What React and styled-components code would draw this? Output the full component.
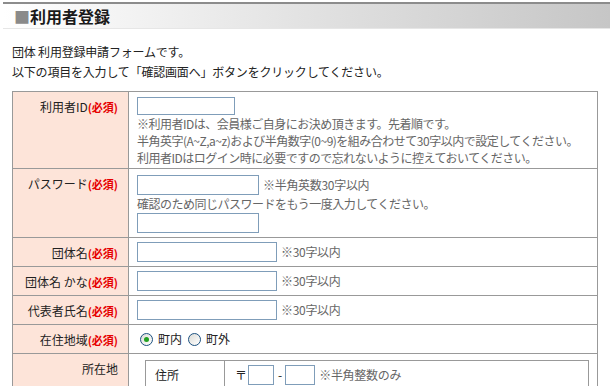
import React from 'react';
import styled, { createGlobalStyle } from 'styled-components';

const GlobalStyle = createGlobalStyle`
  body {
    margin: 0;
    background: #ffffff;
    color: #222;
    font-family: "Noto Sans CJK JP", "Noto Sans", sans-serif;
    font-size: 12px;
  }
`;

const Heading = styled.h1`
  margin: 2px 0 0 3px;
  height: 24px;
  padding-left: 11px;
  border-top: 2px solid #8c8c8c;
  border-bottom: 1px solid #e6e6e6;
  background: linear-gradient(to right, #ffffff 0%, #e2e2e2 50%, #c6c6c6 100%);
  font-size: 16px;
  font-weight: bold;
  line-height: 24px;
  color: #1a1a1a;
`;

const Square = styled.span`
  color: #8a8a8a;
`;

const Intro = styled.p`
  margin: 13px 0 0 12px;
  line-height: 20px;
  letter-spacing: -0.2px;
`;

const FormTable = styled.table`
  margin: 9px 0 0 12px;
  width: 586px;
  border-collapse: collapse;
  table-layout: fixed;
`;

const Label = styled.th`
  width: 105px;
  padding: 6px 10px 0 0;
  border: 1px solid #999;
  background: #fde4d9;
  text-align: right;
  vertical-align: top;
  font-weight: normal;
  line-height: 17px;
  color: #222;
  white-space: nowrap;
`;

const Required = styled.span`
  color: #e60000;
  font-weight: bold;
  font-size: 11px;
`;

const Value = styled.td`
  padding: ${(p) => p.$pad || '4px 8px'};
  border: 1px solid #999;
  vertical-align: top;
  line-height: 20px;
`;

const Field = styled.input`
  box-sizing: border-box;
  width: ${(p) => p.$w}px;
  height: ${(p) => p.$h || 20}px;
  margin: 0;
  padding: 1px 3px;
  border: 1px solid #7f9db9;
  background: #fff;
  vertical-align: top;
  font: inherit;
`;

const Hint = styled.span`
  margin-left: 4px;
  color: #666;
  letter-spacing: -0.3px;
`;

const Note = styled.div`
  margin-top: ${(p) => p.$mt || 0}px;
  color: #666;
  line-height: ${(p) => p.$lh || 17}px;
  letter-spacing: -0.5px;
  white-space: nowrap;
`;

const Line = styled.div`
  display: flex;
  align-items: center;
  height: 20px;
  margin-top: ${(p) => p.$mt || 0}px;
`;

const RadioGroup = styled.div`
  display: flex;
  align-items: center;
  height: 20px;
  padding-left: 3px;
`;

const Radio = styled.span`
  position: relative;
  box-sizing: border-box;
  width: 13px;
  height: 13px;
  margin-right: 5px;
  border: 1px solid #1c5180;
  border-radius: 50%;
  background: linear-gradient(135deg, #dcdcd7, #ffffff);

  &::after {
    content: '';
    display: ${(p) => (p.$checked ? 'block' : 'none')};
    position: absolute;
    left: 3px;
    top: 3px;
    width: 5px;
    height: 5px;
    border-radius: 50%;
    background: #21a121;
  }
`;

const RadioText = styled.span`
  margin-right: 6px;
`;

const Inner = styled.table`
  margin: 1px 0 0 8px;
  width: 444px;
  border-collapse: collapse;
`;

const InnerLabel = styled.th`
  width: 69px;
  padding: 4px 0 4px 9px;
  border: 1px solid #999;
  text-align: left;
  font-weight: normal;
  line-height: 20px;
`;

const InnerValue = styled.td`
  padding: 4px 0 4px 10px;
  border: 1px solid #999;
  line-height: 20px;
`;

const Mark = styled.span`
  margin-right: 1px;
`;

const Dash = styled.span`
  margin: 0 3px 0 4px;
`;

const req = <Required>(必須)</Required>;

export default function App() {
  return (
    <>
      <GlobalStyle />
      <Heading>
        <Square>■</Square>利用者登録
      </Heading>
      <Intro>
        団体 利用登録申請フォームです。
        <br />
        以下の項目を入力して「確認画面へ」ボタンをクリックしてください。
      </Intro>
      <FormTable>
        <tbody>
          <tr>
            <Label>利用者ID{req}</Label>
            <Value $pad="5px 8px 2px">
              <Field $w={98} $h={18} />
              <Note $mt={-2}>
                ※利用者IDは、会員様ご自身にお決め頂きます。先着順です。
                <br />
                半角英字(A~Z,a~z)および半角数字(0~9)を組み合わせて30字以内で設定してください。
                <br />
                利用者IDはログイン時に必要ですので忘れないように控えておいてください。
              </Note>
            </Value>
          </tr>
          <tr>
            <Label>パスワード{req}</Label>
            <Value $pad="6px 8px 4px">
              <Line>
                <Field $w={122} />
                <Hint>※半角英数30字以内</Hint>
              </Line>
              <Note $lh={17}>確認のため同じパスワードをもう一度入力してください。</Note>
              <Line $mt={1}>
                <Field $w={122} />
              </Line>
            </Value>
          </tr>
          <tr>
            <Label>団体名{req}</Label>
            <Value>
              <Line>
                <Field $w={140} />
                <Hint>※30字以内</Hint>
              </Line>
            </Value>
          </tr>
          <tr>
            <Label>団体名 かな{req}</Label>
            <Value>
              <Line>
                <Field $w={140} />
                <Hint>※30字以内</Hint>
              </Line>
            </Value>
          </tr>
          <tr>
            <Label>代表者氏名{req}</Label>
            <Value>
              <Line>
                <Field $w={140} />
                <Hint>※30字以内</Hint>
              </Line>
            </Value>
          </tr>
          <tr>
            <Label>在住地域{req}</Label>
            <Value>
              <RadioGroup>
                <Radio $checked />
                <RadioText>町内</RadioText>
                <Radio />
                <RadioText>町外</RadioText>
              </RadioGroup>
            </Value>
          </tr>
          <tr>
            <Label>所在地</Label>
            <Value $pad="5px 8px 8px">
              <Inner>
                <tbody>
                  <tr>
                    <InnerLabel>住所</InnerLabel>
                    <InnerValue>
                      <Line>
                        <Mark>〒</Mark>
                        <Field $w={26} />
                        <Dash>-</Dash>
                        <Field $w={30} />
                        <Hint>※半角整数のみ</Hint>
                      </Line>
                    </InnerValue>
                  </tr>
                </tbody>
              </Inner>
            </Value>
          </tr>
        </tbody>
      </FormTable>
    </>
  );
}
